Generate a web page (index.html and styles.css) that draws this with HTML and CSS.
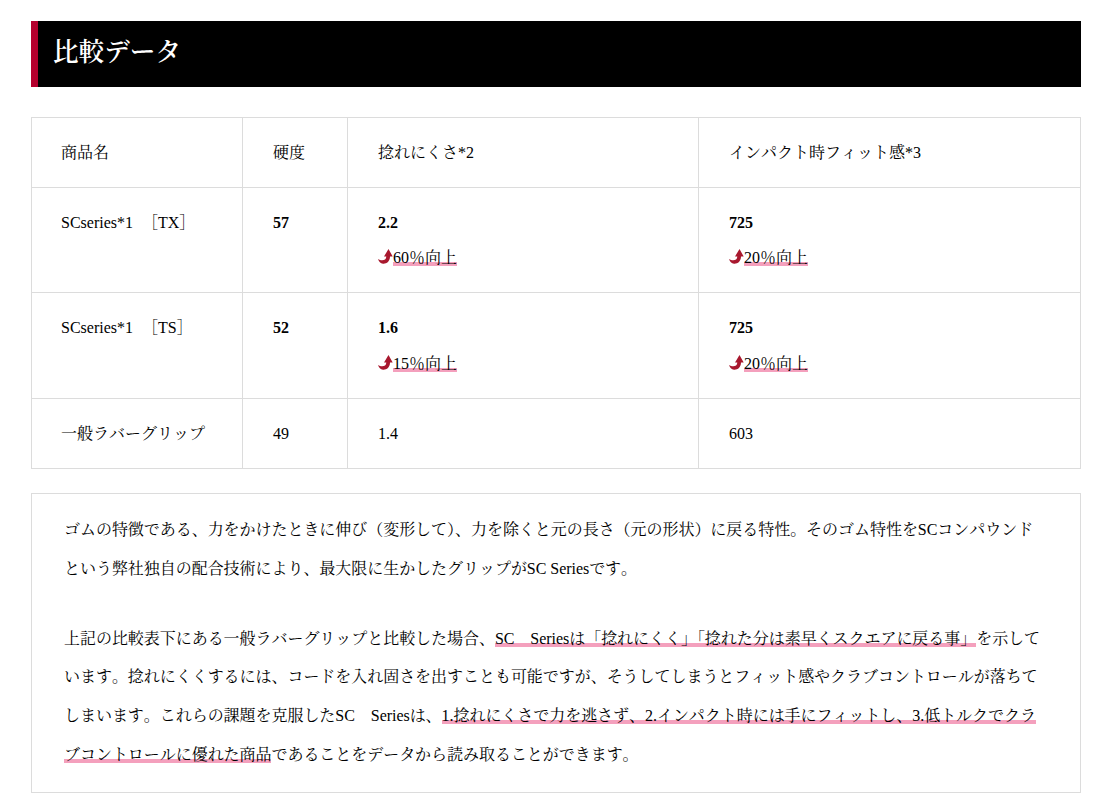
FILE: index.html
```html
<!DOCTYPE html>
<html lang="ja">
<head>
<meta charset="utf-8">
<title>比較データ</title>
<link rel="stylesheet" href="styles.css">
</head>
<body>
<main class="page">
  <h2 class="heading">比較データ</h2>
  <table class="compare">
    <colgroup><col class="c1"><col class="c2"><col class="c3"><col class="c4"></colgroup>
    <tr><td>商品名</td><td>硬度</td><td>捻れにくさ*2</td><td>インパクト時フィット感*3</td></tr>
    <tr>
      <td>SCseries*1 <span class="size">［TX］</span></td><td><b>57</b></td>
      <td><b>2.2</b><br><svg class="arrow" viewBox="0 0 15 15"><path d="M0 10C3 12 8.3 12 8.3 7.5L6 7.5L10.5 0L14.7 7.5L12 7.5C12 12.5 8.5 15 5 14.7C2.5 14.5 .8 12.5 0 10Z"/></svg><span class="mark">60％向上</span></td>
      <td><b>725</b><br><svg class="arrow" viewBox="0 0 15 15"><path d="M0 10C3 12 8.3 12 8.3 7.5L6 7.5L10.5 0L14.7 7.5L12 7.5C12 12.5 8.5 15 5 14.7C2.5 14.5 .8 12.5 0 10Z"/></svg><span class="mark">20％向上</span></td>
    </tr>
    <tr>
      <td>SCseries*1 <span class="size">［TS］</span></td><td><b>52</b></td>
      <td><b>1.6</b><br><svg class="arrow" viewBox="0 0 15 15"><path d="M0 10C3 12 8.3 12 8.3 7.5L6 7.5L10.5 0L14.7 7.5L12 7.5C12 12.5 8.5 15 5 14.7C2.5 14.5 .8 12.5 0 10Z"/></svg><span class="mark">15％向上</span></td>
      <td><b>725</b><br><svg class="arrow" viewBox="0 0 15 15"><path d="M0 10C3 12 8.3 12 8.3 7.5L6 7.5L10.5 0L14.7 7.5L12 7.5C12 12.5 8.5 15 5 14.7C2.5 14.5 .8 12.5 0 10Z"/></svg><span class="mark">20％向上</span></td>
    </tr>
    <tr><td>一般ラバーグリップ</td><td>49</td><td>1.4</td><td>603</td></tr>
  </table>
  <section class="note">
    <p>ゴムの特徴である、力をかけたときに伸び（変形して）、力を除くと元の長さ（元の形状）に戻る特性。そのゴム特性をSCコンパウンドという弊社独自の配合技術により、最大限に生かしたグリップがSC Seriesです。</p>
    <p>上記の比較表下にある一般ラバーグリップと比較した場合、<span class="mark">SC　Seriesは「捻れにくく」「捻れた分は素早くスクエアに戻る事」</span>を示しています。捻れにくくするには、コードを入れ固さを出すことも可能ですが、そうしてしまうとフィット感やクラブコントロールが落ちてしまいます。これらの課題を克服したSC　Seriesは、<span class="mark">1.捻れにくさで力を逃さず、2.インパクト時には手にフィットし、3.低トルクでクラブコントロールに優れた商品</span>であることをデータから読み取ることができます。</p>
  </section>
</main>
</body>
</html>
```
FILE: styles.css
```css
* { box-sizing: border-box; }
html, body { margin: 0; background: #fff; }
body {
  font-family: "Liberation Serif", "Noto Serif CJK JP", "Noto Sans CJK JP", serif;
  font-size: 16px;
  color: #000;
  font-kerning: none;
}
.page { padding: 21px 22px 9px 31px; }
.heading {
  margin: 0 0 30px;
  height: 66px;
  padding-left: 15px;
  border-left: 7px solid #b4002d;
  background: #000;
  color: #fff;
  font-size: 25.6px;
  font-weight: 600;
  line-height: 64px;
}
.compare {
  width: 100%;
  table-layout: fixed;
  border-collapse: collapse;
  margin-bottom: 24px;
}
.c1 { width: 211px; }
.c2 { width: 105px; }
.c3 { width: 351px; }
.compare td {
  border: 1px solid #dcdcdc;
  padding: 17px 30px;
  line-height: 35.15px;
  vertical-align: top;
}
.compare td:first-child { padding-left: 29px; }
.compare b { font-weight: 700; }
.size { margin-left: 5px; }
.arrow {
  width: 15px;
  height: 15px;
  fill: #a8182e;
  vertical-align: -1px;
}
.mark {
  background: linear-gradient(transparent 78%, #f4a0bd 78%);
}
.note {
  border: 1px solid #dcdcdc;
  padding: 17px 36px 17.8px 32px;
  line-height: 38.7px;
  letter-spacing: -0.04px;
}
.note p { margin: 0 0 31.3px; }
.note p:last-child { margin-bottom: 0; }
```
